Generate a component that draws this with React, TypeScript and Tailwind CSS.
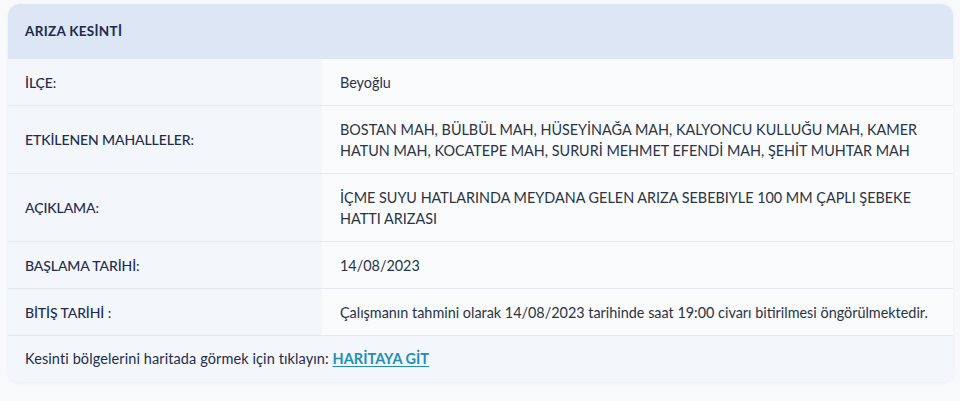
import React from 'react';

interface Row {
  label: string;
  value: string;
}

const rows: Row[] = [
  { label: 'İLÇE:', value: 'Beyoğlu' },
  {
    label: 'ETKİLENEN MAHALLELER:',
    value:
      'BOSTAN MAH, BÜLBÜL MAH, HÜSEYİNAĞA MAH, KALYONCU KULLUĞU MAH, KAMER HATUN MAH, KOCATEPE MAH, SURURİ MEHMET EFENDİ MAH, ŞEHİT MUHTAR MAH',
  },
  {
    label: 'AÇIKLAMA:',
    value: 'İÇME SUYU HATLARINDA MEYDANA GELEN ARIZA SEBEBIYLE 100 MM ÇAPLI ŞEBEKE HATTI ARIZASI',
  },
  { label: 'BAŞLAMA TARİHİ:', value: '14/08/2023' },
  {
    label: 'BİTİŞ TARİHİ :',
    value: 'Çalışmanın tahmini olarak 14/08/2023 tarihinde saat 19:00 civarı bitirilmesi öngörülmektedir.',
  },
];

const App: React.FC = () => {
  return (
    <div
      className="w-[960px] h-[401px] bg-[#f8f9fb] pt-[4px] pl-[8px] overflow-hidden"
      style={{ fontFamily: "'Lato', 'Noto Sans', sans-serif" }}
    >
      <div className="w-[945px] rounded-[12px] overflow-hidden bg-[#f9fbfd] shadow-[0_1px_4px_rgba(30,45,80,0.06)]">
        {/* Header */}
        <div className="h-[55px] bg-[#dde6f5] flex items-center px-[17px]">
          <span className="text-[13.5px] font-bold text-[#1c2b4c] tracking-[0.3px]">ARIZA KESİNTİ</span>
        </div>

        {/* Rows */}
        {rows.map(row => (
          <div key={row.label} className="flex border-b border-[#e4e9f0]">
            <div className="w-[314px] shrink-0 bg-[#f3f6fb] px-[17px] flex items-center">
              <span className="text-[14px] font-medium text-[#1e2d4f] tracking-[-0.1px]">{row.label}</span>
            </div>
            <div className="flex-1 pl-[18px] pr-[14px] pt-[13px] pb-[12px] text-[14.4px] leading-[21px] text-[#2b3444]">
              {row.value}
            </div>
          </div>
        ))}

        {/* Footer */}
        <div className="h-[46px] bg-[#f3f6fb] flex items-center px-[17px] text-[14.5px] text-[#1e2d4f] tracking-[0.1px]">
          Kesinti bölgelerini haritada görmek için tıklayın:&nbsp;
          <a href="#" className="font-bold text-[#1f8fb8] underline underline-offset-2 tracking-[0px]">
            HARİTAYA GİT
          </a>
        </div>
      </div>
    </div>
  );
};

export default App;
